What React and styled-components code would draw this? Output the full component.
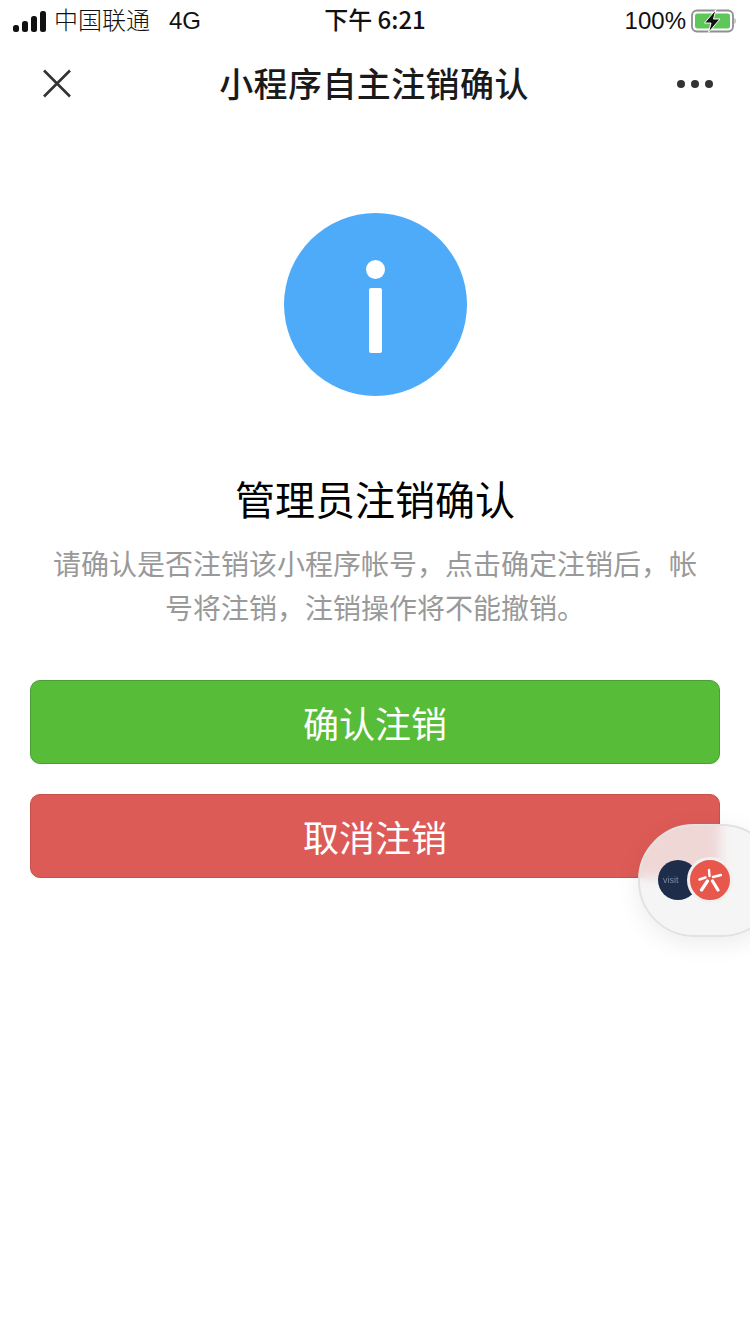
import React from "react";
import styled, { createGlobalStyle } from "styled-components";

const GlobalStyle = createGlobalStyle`
  html, body { margin: 0; padding: 0; background: #fff; }
  body { font-family: "Liberation Sans", "Noto Sans CJK SC", sans-serif; }
  * { box-sizing: border-box; }
`;

const Page = styled.div`
  position: relative;
  width: 750px;
  height: 1334px;
  overflow: hidden;
  background: #fff;
`;

// status bar
const StatusBar = styled.div`
  height: 42px;
  padding: 0 13px;
  display: grid;
  grid-template-columns: 1fr auto 1fr;
  align-items: center;
  color: #111;
  font-size: 24px;
`;
const StatusLeft = styled.div`
  display: flex;
  align-items: center;
`;
const StatusRight = styled.div`
  display: flex;
  align-items: center;
  justify-content: flex-end;
  gap: 5px;
  padding-right: 1px;
`;
const Carrier = styled.span`
  margin-left: 6px;
  margin-bottom: 6px;
  font-family: "Noto Sans CJK SC", sans-serif;
  font-weight: 300;
`;
const NetType = styled.span`
  margin-left: 19px;
`;
const Clock = styled.span`
  margin-bottom: 6px;
  font-family: "Noto Sans CJK SC", sans-serif;
  font-weight: 500;
`;

// nav bar
const NavBar = styled.div`
  height: 84px;
  padding: 0 36px 0 42px;
  display: flex;
  align-items: center;
  justify-content: space-between;
`;
const NavTitle = styled.div`
  margin: 0 0 4px 0;
  font-family: "Noto Sans CJK SC", sans-serif;
  font-size: 34px;
  font-weight: 500;
  letter-spacing: 0.4px;
  color: #1a1a1a;
`;

// content
const Main = styled.div`
  padding: 87px 30px 0;
  display: flex;
  flex-direction: column;
  align-items: center;
`;
const InfoCircle = styled.div`
  width: 183px;
  height: 183px;
  border-radius: 50%;
  background: #4eabf9;
  display: flex;
  flex-direction: column;
  align-items: center;
  padding-top: 47px;
`;
const InfoDot = styled.div`
  width: 19px;
  height: 19px;
  border-radius: 50%;
  background: #fff;
`;
const InfoBar = styled.div`
  width: 13px;
  height: 65px;
  margin-top: 9px;
  border-radius: 2px;
  background: #fff;
`;
const Heading = styled.h1`
  margin: 72px 0 0;
  font-family: "Noto Sans CJK SC", sans-serif;
  font-size: 40px;
  line-height: 60px;
  font-weight: 400;
  color: #000;
`;
const Desc = styled.p`
  margin: 13px 0 0;
  width: 644px;
  font-family: "Noto Sans CJK SC", sans-serif;
  font-size: 28px;
  line-height: 44px;
  color: #999;
  text-align: center;
`;
const Actions = styled.div`
  width: 100%;
  margin-top: 51px;
  display: flex;
  flex-direction: column;
  gap: 30px;
`;
const ActionButton = styled.button`
  height: 84px;
  padding: 0;
  border-radius: 10px;
  border: 1px solid ${(p) => (p.$danger ? "#c9504b" : "#4a9e36")};
  background: ${(p) => (p.$danger ? "#dd5b57" : "#57bc38")};
  color: #fff;
  font-family: "Noto Sans CJK SC", sans-serif;
  font-size: 36px;
  font-weight: 400;
`;

// floating capsule on the right edge
const Capsule = styled.div`
  position: absolute;
  left: 638px;
  top: 824px;
  width: 140px;
  height: 113px;
  border-radius: 56px;
  border: 2px solid #e2e2e2;
  background: rgba(243, 243, 243, 0.82);
  backdrop-filter: blur(6px);
  box-shadow: 0 6px 24px rgba(0, 0, 0, 0.08);
`;
const DarkBadge = styled.div`
  position: absolute;
  left: 18px;
  top: 34px;
  width: 40px;
  height: 40px;
  border-radius: 50%;
  background: #1d2d4a;
  color: #7f8ba3;
  font-size: 9px;
  line-height: 40px;
  padding-left: 5px;
`;
const RedBadge = styled.div`
  position: absolute;
  left: 47px;
  top: 31px;
  width: 46px;
  height: 46px;
  border-radius: 50%;
  background: #e8574c;
  border: 3px solid #f1f1f1;
  display: flex;
  align-items: center;
  justify-content: center;
`;

const SignalIcon = () => (
  <svg width="35" height="21" viewBox="0 0 35 21">
    <rect x="0" y="14" width="6" height="7" rx="2.5" fill="#111" />
    <rect x="9" y="10" width="6" height="11" rx="2.5" fill="#111" />
    <rect x="18" y="5" width="6" height="16" rx="2.5" fill="#111" />
    <rect x="27" y="0" width="6" height="21" rx="2.5" fill="#111" />
  </svg>
);

const BatteryIcon = () => (
  <svg width="45" height="24" viewBox="0 0 45 24">
    <rect x="1" y="1.5" width="41" height="21" rx="5" fill="none" stroke="#8f8f8f" strokeWidth="1.8" />
    <rect x="4" y="4.5" width="35" height="15" rx="2.5" fill="#5dc75a" />
    <path d="M43.5 9 C45 9.6 45 14.4 43.5 15 Z" fill="#9a9a9a" />
    <path d="M25 0.5 L13.5 14 H20 L17.5 23.5 L29 10 H22.5 Z" fill="#111" stroke="#fff" strokeWidth="1" />
  </svg>
);

const CloseIcon = () => (
  <svg width="30" height="30" viewBox="0 0 30 30">
    <path d="M2 1.5 L28 27.5 M28 1.5 L2 27.5" stroke="#333" strokeWidth="2.6" fill="none" />
  </svg>
);

const MoreIcon = () => (
  <svg width="38" height="10" viewBox="0 0 38 10">
    <circle cx="5" cy="5" r="4" fill="#333" />
    <circle cx="19" cy="5" r="4" fill="#333" />
    <circle cx="33" cy="5" r="4" fill="#333" />
  </svg>
);

const PetalIcon = () => (
  <svg width="24" height="24" viewBox="0 0 24 24">
    <g stroke="#fff" strokeLinecap="round" fill="none">
      <path d="M11 2 L11.5 8" strokeWidth="2.4" />
      <path d="M15 9 L23 7" strokeWidth="2.4" />
      <path d="M7.5 9.5 L1.5 11.5" strokeWidth="2.4" />
      <path d="M9.5 13 L3.5 22" strokeWidth="3.2" />
      <path d="M14.5 13 L20 22" strokeWidth="3.2" />
    </g>
  </svg>
);

export default function App() {
  return (
    <Page>
      <GlobalStyle />
      <StatusBar>
        <StatusLeft>
          <SignalIcon />
          <Carrier>中国联通</Carrier>
          <NetType>4G</NetType>
        </StatusLeft>
        <Clock>下午 6:21</Clock>
        <StatusRight>
          <span>100%</span>
          <BatteryIcon />
        </StatusRight>
      </StatusBar>
      <NavBar>
        <CloseIcon />
        <NavTitle>小程序自主注销确认</NavTitle>
        <MoreIcon />
      </NavBar>
      <Main>
        <InfoCircle>
          <InfoDot />
          <InfoBar />
        </InfoCircle>
        <Heading>管理员注销确认</Heading>
        <Desc>请确认是否注销该小程序帐号，点击确定注销后，帐号将注销，注销操作将不能撤销。</Desc>
        <Actions>
          <ActionButton>确认注销</ActionButton>
          <ActionButton $danger>取消注销</ActionButton>
        </Actions>
      </Main>
      <Capsule>
        <DarkBadge>visit</DarkBadge>
        <RedBadge>
          <PetalIcon />
        </RedBadge>
      </Capsule>
    </Page>
  );
}
